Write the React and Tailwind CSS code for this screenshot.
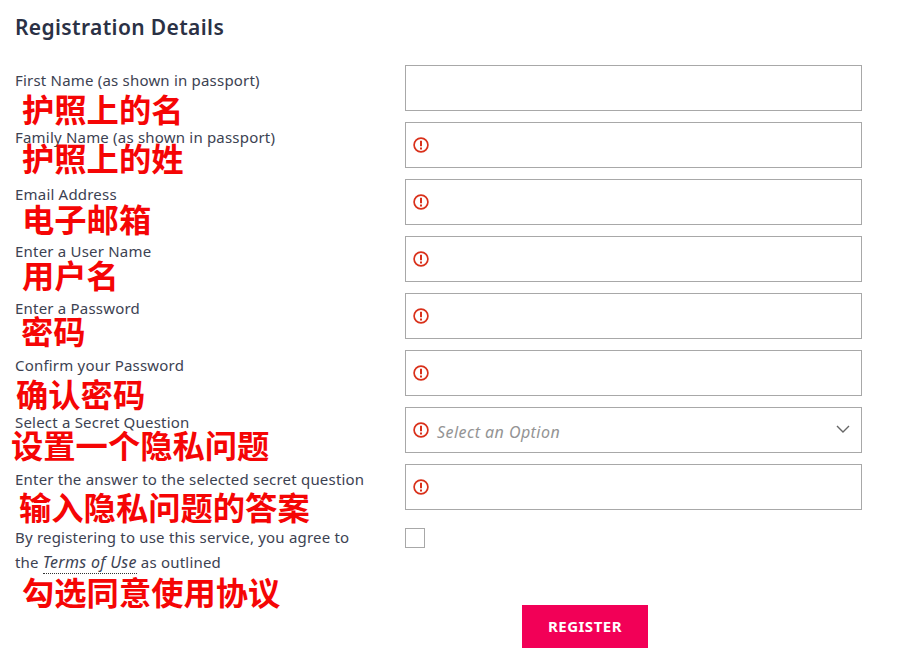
const FONT = '"Noto Sans", "Noto Sans CJK SC", sans-serif';
const CJK = '"Noto Sans CJK SC", sans-serif';

function Alert() {
  return (
    <svg width="16" height="16" viewBox="0 0 16 16" fill="none" className="shrink-0">
      <circle cx="8" cy="8" r="6.9" stroke="#d9301a" strokeWidth="1.7" />
      <path d="M8 3.8V9.2" stroke="#d9301a" strokeWidth="2" />
      <path d="M8 10.6V12.4" stroke="#d9301a" strokeWidth="2" />
    </svg>
  );
}

function Note({ text, x, y }) {
  return (
    <span
      className="absolute whitespace-nowrap text-[32.3px] leading-[32px] font-bold text-[#f50505]"
      style={{ left: x, top: y, fontFamily: CJK }}
    >
      {text}
    </span>
  );
}

const rows = [
  { label: 'First Name (as shown in passport)', note: '护照上的名', nx: 22, ny: 27, plain: true },
  { label: 'Family Name (as shown in passport)', note: '护照上的姓', nx: 22, ny: 19 },
  { label: 'Email Address', note: '电子邮箱', nx: 22, ny: 23 },
  { label: 'Enter a User Name', note: '用户名', nx: 22, ny: 22 },
  { label: 'Enter a Password', note: '密码', nx: 21, ny: 21 },
  { label: 'Confirm your Password', note: '确认密码', nx: 16, ny: 27 },
  { label: 'Select a Secret Question', note: '设置一个隐私问题', nx: 11, ny: 21, select: true },
  { label: 'Enter the answer to the selected secret question', note: '输入隐私问题的答案', nx: 19, ny: 26 },
];

export default function App() {
  return (
    <div className="w-[917px] h-[670px] bg-white overflow-hidden relative" style={{ fontFamily: FONT }}>
      <h1 className="pl-[15px] pt-[13px] h-[65px] text-[21px] leading-[28px] font-semibold tracking-[0.37px] text-[#2b3145]">
        Registration Details
      </h1>
      {rows.map((r) => (
        <div key={r.label} className="relative flex h-[57px] text-[#3c4252]">
          <label className="w-[405px] shrink-0 pl-[15px] pt-[5px] text-[15px] leading-[20px] tracking-[0.2px]">
            {r.label}
          </label>
          <div className="w-[457px] h-[46px] border border-[#a8a8a8] flex items-center pl-[7px] pr-[10px]">
            {!r.plain && <Alert />}
            {r.select && (
              <>
                <span className="ml-[8px] mt-[3px] italic text-[16px] tracking-[0.45px] text-[#949494] flex-1">Select an Option</span>
                <svg width="16" height="10" viewBox="0 0 16 10" fill="none" className="mb-[2px]">
                  <path d="M2 2L8 8L14 2" stroke="#666" strokeWidth="1.4" />
                </svg>
              </>
            )}
          </div>
          <Note text={r.note} x={r.nx} y={r.ny} />
        </div>
      ))}
      <div className="relative flex h-[84px] text-[#3c4252]">
        <div className="w-[405px] shrink-0 pl-[15px] pr-[50px] pt-[4px] text-[15px] leading-[25px] tracking-[0.2px]">
          By registering to use this service, you agree to the{' '}
          <span className="italic text-[16px] tracking-[0.3px] border-b border-dotted border-[#333]">Terms of Use</span> as outlined
        </div>
        <div className="w-[20px] h-[20px] mt-[7px] border border-[#a8a8a8]" />
        <Note text="勾选同意使用协议" x={22} y={54} />
      </div>
      <div className="flex pl-[522px]">
        <button className="w-[126px] h-[43px] bg-[#f20057] text-white text-[15px] font-bold tracking-[0.5px]">
          REGISTER
        </button>
      </div>
    </div>
  );
}
